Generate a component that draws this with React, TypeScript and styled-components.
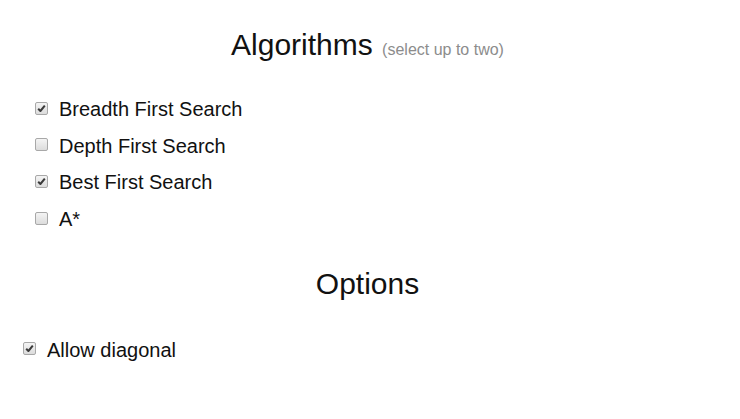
import React from "react";
import styled, { createGlobalStyle } from "styled-components";

const GlobalStyle = createGlobalStyle`
  html, body { margin: 0; padding: 0; background: #fff; }
  body { font-family: "Liberation Sans", Arial, sans-serif; color: #111; }
`;

const Page = styled.div`
  width: 735px;
  padding-top: 28px;
  display: flex;
  flex-direction: column;
`;

const Heading = styled.h1<{ $gap: number }>`
  margin: 0 0 ${(p) => p.$gap}px 0;
  font-size: 30px;
  font-weight: 400;
  line-height: 33px;
  text-align: center;
  color: #111;
`;

const Hint = styled.small`
  font-size: 16px;
  color: #8c8c8c;
  margin-left: 1px;
`;

const List = styled.div<{ $indent: number; $gap: number }>`
  display: flex;
  flex-direction: column;
  padding-left: ${(p) => p.$indent}px;
  margin-bottom: ${(p) => p.$gap}px;
`;

const Row = styled.label`
  display: flex;
  align-items: center;
  height: 36.67px;
  font-size: 20px;
  line-height: 36.67px;
  color: #111;
`;

const Box = styled.span<{ $checked: boolean }>`
  width: 11px;
  height: 11px;
  border: 1px solid #a8a8a8;
  border-radius: 2px;
  background: linear-gradient(#f4f4f4, #dcdcdc);
  margin-right: 11px;
  margin-top: -2px;
  display: flex;
  align-items: center;
  justify-content: center;
  flex-shrink: 0;
`;

const Check = () => (
  <svg width="9" height="9" viewBox="0 0 9 9">
    <path d="M1.2 4.8 L3.4 7 L7.8 1.6" fill="none" stroke="#3a3a3a" strokeWidth="2" strokeLinejoin="round" />
  </svg>
);

const Item = ({ label, checked }: { label: string; checked: boolean }) => (
  <Row>
    <Box $checked={checked}>{checked && <Check />}</Box>
    {label}
  </Row>
);

export default function App() {
  return (
    <>
      <GlobalStyle />
      <Page>
        <Heading $gap={25}>
          Algorithms <Hint>(select up to two)</Hint>
        </Heading>
        <List $indent={35} $gap={29}>
          <Item label="Breadth First Search" checked />
          <Item label="Depth First Search" checked={false} />
          <Item label="Best First Search" checked />
          <Item label="A*" checked={false} />
        </List>
        <Heading $gap={32}>Options</Heading>
        <List $indent={23} $gap={0}>
          <Item label="Allow diagonal" checked />
        </List>
      </Page>
    </>
  );
}
